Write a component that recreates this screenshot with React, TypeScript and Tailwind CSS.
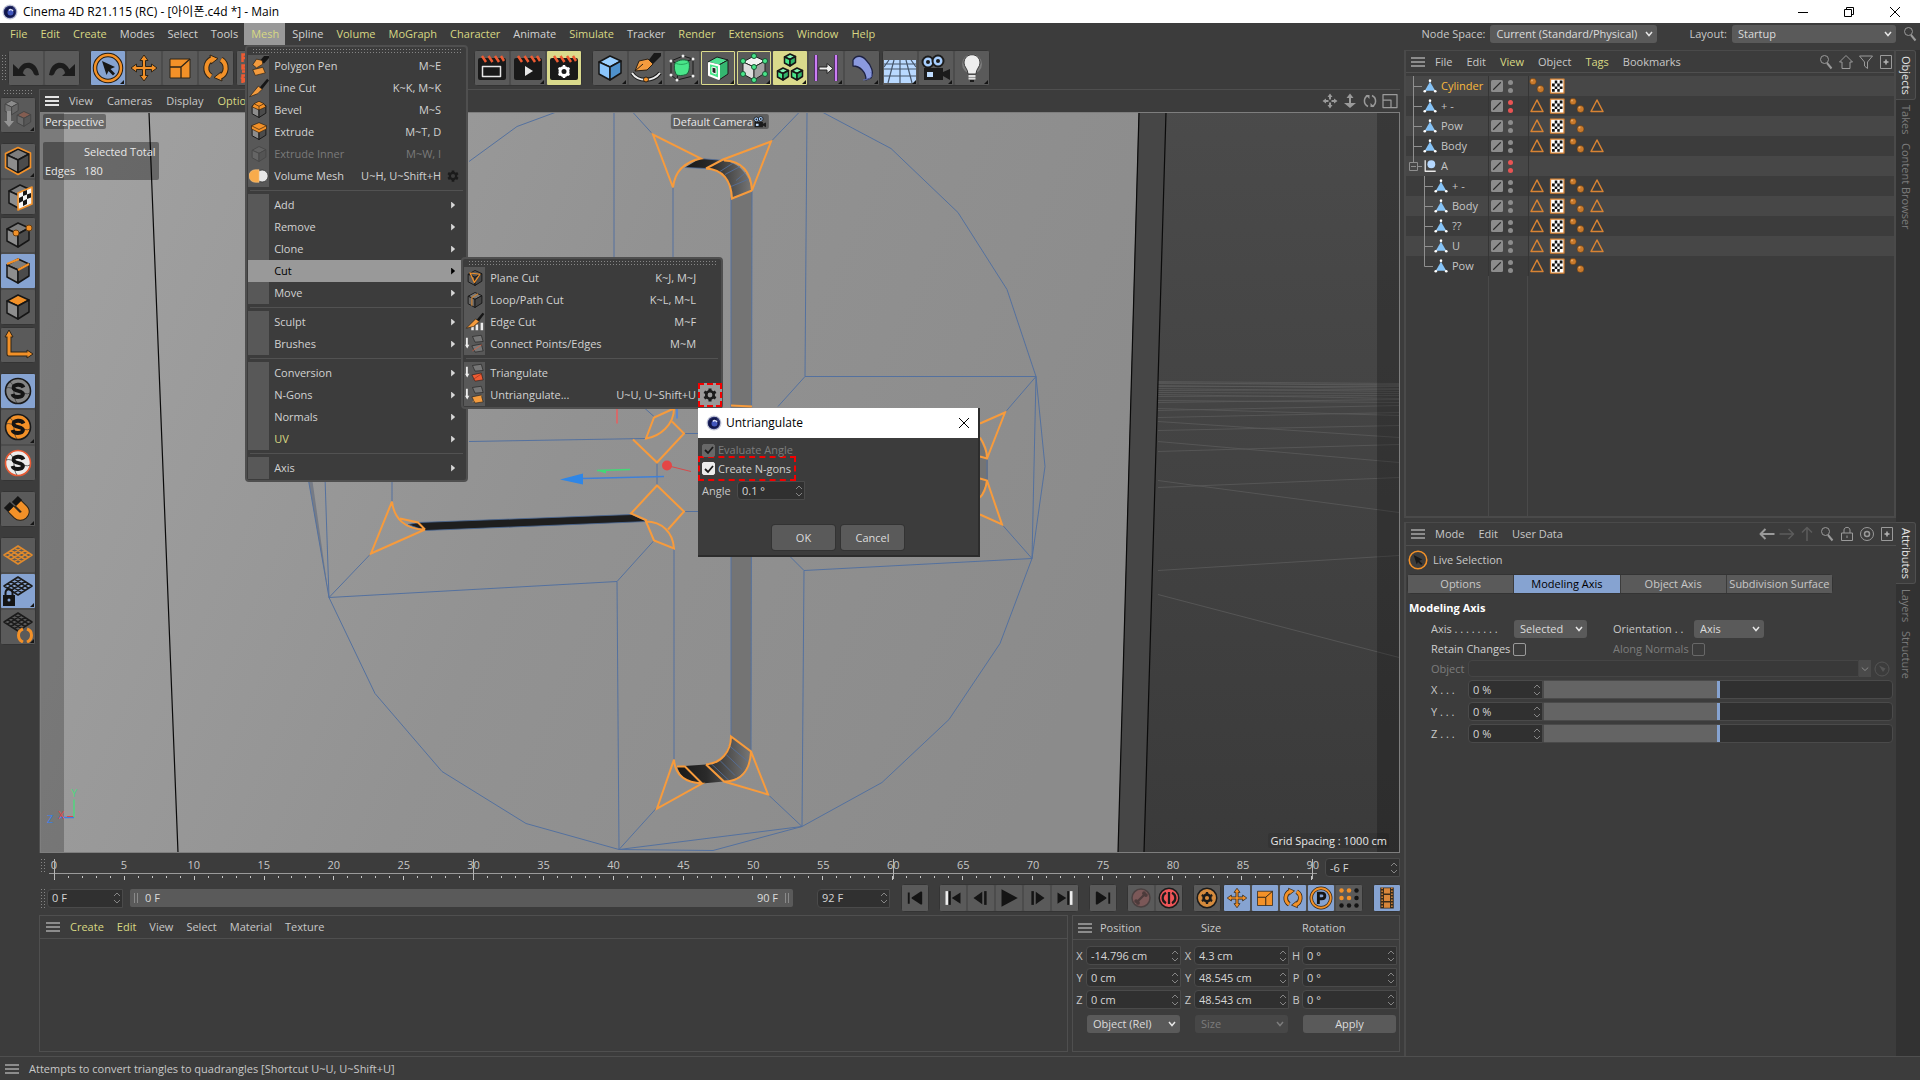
import { useState } from "react";
import type { ReactNode } from "react";

// small svg wrapper, every icon is drawn on a 32x32 canvas
function Ico({ children, size = "size-8" }: { children: ReactNode; size?: string }) {
    return (
        <svg viewBox="0 0 32 32" className={`${size} shrink-0`} fill="none" strokeLinejoin="round">
            {children}
        </svg>
    )
}

function CubeShape({ top = "#7d7d7d", left = "#8d8d8d", right = "#4b4b4b", line = "#161616", w = 1.5 }: { top?: string; left?: string; right?: string; line?: string; w?: number }) {
    return (
        <g stroke={line} strokeWidth={w}>
            <path d="M16 4 L27 9 L16 15 L5 10 Z" fill={top} />
            <path d="M5 10 L16 15 V28 L5 22 Z" fill={left} />
            <path d="M27 9 L16 15 V28 L27 21 Z" fill={right} />
        </g>
    )
}

function Gear({ color = "#1b1b1b", size = "size-3" }: { color?: string; size?: string }) {
    return (
        <Ico size={size}>
            <g stroke={color} strokeWidth="7">
                <path d="M16 1 V31 M3 8.500 L29 23.500 M29 8.500 L3 23.500" strokeDasharray="7 16 7" />
            </g>
            <circle cx="16" cy="16" r="8.500" stroke={color} strokeWidth="6" />
        </Ico>
    )
}

function C4dLogo() {
    return (
        <Ico size="size-4">
            <circle cx="16" cy="16" r="15" fill="#c6cad9" />
            <circle cx="16" cy="16" r="12.500" fill="#2a3170" />
            <path d="M5 21 C3 11 11 4 23 5 C20 8 20 10 25 13 C27 18 26 22 22 25 C15 28 8 27 5 21Z" fill="#11174a" />
            <circle cx="17" cy="17" r="6" fill="#4257bd" />
            <path d="M14 13 C16 10 20 11 22 14" stroke="#dfe5fb" strokeWidth="3" />
        </Ico>
    )
}

function Burger({ color = "bg-[#8c8c8c]" }: { color?: string }) {
    return (
        <button aria-label="Panel menu" className="flex w-3.5 flex-col gap-[2px]">
            <span className={`h-[2px] ${color}`} />
            <span className={`h-[2px] ${color}`} />
            <span className={`h-[2px] ${color}`} />
        </button>
    )
}

function Grip({ vertical = false }: { vertical?: boolean }) {
    return vertical
        ? <div className="h-7 w-[5px] shrink-0 bg-[radial-gradient(#858585_30%,transparent_31%)] bg-[size:3px_3px]" />
        : <div className="h-[5px] w-full bg-[radial-gradient(#858585_30%,transparent_31%)] bg-[size:3px_3px]" />
}

/* ---------- tool icons ---------- */
const MoveShape = (
    <path d="M16 3 L20 8.500 H17.500 V14.500 H23.500 V12 L29 16 L23.500 20 V17.500 H17.500 V23.500 H20 L16 29 L12 23.500 H14.500 V17.500 H8.500 V20 L3 16 L8.500 12 V14.500 H14.500 V8.500 H12 Z" fill="#f39128" stroke="#2d2418" />
)
const ScaleShape = (
    <g stroke="#2d2418"><path d="M6 7 H26 V26 H6 Z" fill="#f39128" /><path d="M6 15 H17 V26 M17 15 L26 7" strokeWidth="1.300" /></g>
)
const RotateShape = (
    <g>
        <g stroke="#2d2418" strokeWidth="6"><path d="M11 24.500 A10 10 0 0 1 12.500 6.800" /><path d="M21 7.500 A10 10 0 0 1 19.500 25.200" /></g>
        <path d="M10 3 L18 6.500 L11 12Z M22 29 L14 25.500 L21 20Z" fill="#f39128" stroke="#2d2418" />
        <g stroke="#f39128" strokeWidth="4"><path d="M11 24.500 A10 10 0 0 1 12.500 6.800" /><path d="M21 7.500 A10 10 0 0 1 19.500 25.200" /></g>
    </g>
)

const Undo = <Ico><path d="M8 20 C10 9 24 7 28 19 L29 23 C25 24 24 23 23 20 C20 14 14 15 13 21" fill="#1c1c1c" /><path d="M3 12 L3 24 L16 24Z" fill="#1c1c1c" /></Ico>
const Redo = <Ico><path d="M24 20 C22 9 8 7 4 19 L3 23 C7 24 8 23 9 20 C12 14 18 15 19 21" fill="#1c1c1c" /><path d="M29 12 L29 24 L16 24Z" fill="#1c1c1c" /></Ico>
const LiveSel = (
    <Ico>
        <circle cx="16" cy="16" r="13" stroke="#241c12" strokeWidth="4.500" />
        <circle cx="16" cy="16" r="13" stroke="#f39128" strokeWidth="2.500" />
        <path d="M10 9 L23 15 L18.500 17 L23 21.500 L21 23.500 L16.500 19 L14.500 23Z" fill="#181818" />
    </Ico>
)
const Psr = (
    <Ico>
        <g stroke="#ee5b33" strokeWidth="2.500" strokeLinejoin="miter">
            <path d="M4.500 10 V2.500 H8.500 V6 H5 M9 13.500 H4.500 V16.500 H8.500 V19.500 H4 M4.500 31 V23.500 H8.500 V27 H5 L9 31" />
        </g>
    </Ico>
)

function Clapper({ children }: { children: ReactNode }) {
    return (
        <Ico>
            <rect x="2" y="6" width="28" height="22" rx="2" fill="#191919" />
            <path d="M6 4 L10 10 M12.500 4 L16.500 10 M19 4 L23 10 M25 4 L28 9" stroke="#ee5b33" strokeWidth="2.500" />
            {children}
        </Ico>
    )
}

const RenderView = <Clapper><rect x="6.500" y="14.500" width="18" height="10" stroke="#e6e6e6" strokeWidth="1.500" /></Clapper>
const RenderPic = <Clapper><path d="M13 14 L21 19 L13 24Z" fill="#e6e6e6" /></Clapper>
const RenderSet = <Clapper><circle cx="16" cy="19.500" r="4" stroke="#fff" strokeWidth="3" /><path d="M16 13 V26 M10.500 16 L21.500 23 M21.500 16 L10.500 23" stroke="#fff" strokeWidth="2.500" strokeDasharray="3 7 3" /></Clapper>

const Primitive = <Ico><CubeShape top="#9bd0ff" left="#8bc5fb" right="#4f92cd" /></Ico>
const PenTool = (
    <Ico>
        <path d="M18 9 L24 1 H31 V4 L23 12Z" fill="#191919" />
        <path d="M5 19 L9 9 L18 7 L23 12 L17 18Z" fill="#f39b3e" stroke="#2a2015" />
        <path d="M5 19 L13 12" stroke="#2a2015" />
        <path d="M2 21 C8 30 23 30 30 21" stroke="#1b1b1b" strokeWidth="4" />
        <path d="M2 21 C8 30 23 30 30 21" stroke="#ededed" strokeWidth="2" />
        <circle cx="16" cy="27.500" r="2.500" fill="#f39128" stroke="#2a2015" />
    </Ico>
)
const Subdiv = (
    <Ico>
        <path d="M5 9 L17 4 L27 7 V24 L11 28 L5 23Z M5 9 L13 12 L27 7 M13 12 L11 28" stroke="#1a1a1a" />
        <path d="M9 11 C13 7 21 7 23 10 C24 15 23 20 21 22 C17 24 11 24 10 22 C8 18 8 14 9 11Z" fill="#49e68a" stroke="#1d5e3a" />
        <path d="M9 11 C13 13 19 13 23 10" stroke="#27a35c" />
        <g fill="#efefef"><circle cx="5" cy="9" r="1.500" /><circle cx="17" cy="4" r="1.500" /><circle cx="27" cy="7" r="1.500" /><circle cx="27" cy="24" r="1.500" /><circle cx="11" cy="28" r="1.500" /><circle cx="5" cy="23" r="1.500" /></g>
    </Ico>
)
const Extrude = (
    <Ico>
        <path d="M6 10 L15 5 L26 8 L17 13Z" fill="#4fe092" stroke="#1b1b1b" />
        <path d="M17 13 L26 8 V22 L17 28Z" fill="#35b770" stroke="#1b1b1b" />
        <path d="M7 11 L17 13.500 V27 L7 23Z" fill="#49e68a" stroke="#fff" strokeWidth="2" />
        <path d="M10 15 L14 16 V22 L10 20.500Z" fill="#222" stroke="#fff" />
    </Ico>
)
const Cloner = (
    <Ico>
        <CubeShape top="#f2f2f2" left="#dcdcdc" right="#a2a2a2" line="#222" w={1} />
        <g fill="#49e68a" stroke="#1b5535"><circle cx="16" cy="4" r="2.500" /><circle cx="27" cy="9" r="2.500" /><circle cx="5" cy="9" r="2.500" /><circle cx="16" cy="15" r="2.500" /><circle cx="5" cy="22" r="2.500" /><circle cx="27" cy="22" r="2.500" /><circle cx="16" cy="28" r="2.500" /></g>
    </Ico>
)
const ArrayIcon = (
    <Ico>
        <g transform="translate(8 0) scale(.5)"><CubeShape top="#7ff4b2" left="#49e68a" right="#30b56b" w={3} /></g>
        <g transform="translate(1 14) scale(.5)"><CubeShape top="#7ff4b2" left="#49e68a" right="#30b56b" w={3} /></g>
        <g transform="translate(15 14) scale(.5)"><CubeShape top="#7ff4b2" left="#49e68a" right="#30b56b" w={3} /></g>
    </Ico>
)
const FieldIcon = (
    <Ico>
        <path d="M6 3 V29 M26 3 V29" stroke="#2a1d33" strokeWidth="4" />
        <path d="M6 3 V29 M26 3 V29" stroke="#cb7df5" strokeWidth="2.500" />
        <path d="M9 15 H17 V11.500 L23 16.500 L17 21.500 V18 H9Z" fill="#efefef" stroke="#222" />
    </Ico>
)
const Deformer = <Ico><path d="M7 8 C10 3 16 3 20 8 C26 14 28 21 25 26 L20 28 C20 20 14 14 7 14Z" fill="#8b9ae0" stroke="#1e2242" strokeWidth="1.300" /><path d="M17 28 C26 27 27 24 25 20" stroke="#5b68ab" /></Ico>
const FloorIcon = (
    <Ico>
        <rect x="0" y="8" width="32" height="23" fill="#b9d9ff" />
        <path d="M0 12 H32 M0 17 H32 M0 24 H32 M16 8 V31 M10 8 L4 31 M22 8 L28 31 M5 8 L0 15 M27 8 L32 15" stroke="#46566b" strokeWidth="1.200" />
    </Ico>
)
const CameraShape = (
    <g>
        <circle cx="8" cy="10" r="5.500" fill="#a8cfff" stroke="#1b1b1b" strokeWidth="2" /><circle cx="18" cy="9" r="5.500" fill="#a8cfff" stroke="#1b1b1b" strokeWidth="2" />
        <circle cx="8" cy="10" r="2" fill="#1b1b1b" /><circle cx="18" cy="9" r="2" fill="#1b1b1b" />
        <path d="M4 16 H23 V20 L30 17 V28 L23 24 V28 H4Z" fill="#1b1b1b" /><rect x="7" y="20" width="6" height="5" fill="#bfddff" />
    </g>
)
const LightIcon = (
    <Ico>
        <circle cx="16" cy="12" r="10" fill="#a0a0a0" opacity=".5" />
        <path d="M8 11 C8 0 24 0 24 11 C24 15 20 17 20 22 H12 C12 17 8 15 8 11Z" fill="#eee" stroke="#3a3a3a" />
        <path d="M12.500 24 H19.500 M12.500 26.500 H19.500" stroke="#e0e0e0" strokeWidth="2" /><path d="M14 29 H18" stroke="#1b1b1b" strokeWidth="2" />
    </Ico>
)

/* ---------- left palette ---------- */
const MakeEditable = (
    <Ico>
        <g opacity=".55">
            <g transform="translate(0 -1) scale(.6)"><CubeShape top="#b5b5b5" left="#8d8d8d" right="#707070" line="#333" /></g>
            <g transform="translate(12 10) scale(.62)"><CubeShape top="#a5604a" left="#777" right="#555" line="#333" /></g>
            <path d="M5 12 H9 V22 H12 L7 28 L2 22 H5Z" fill="#c5c5c5" />
        </g>
    </Ico>
)
const ModelMode = <Ico><CubeShape /><path d="M16 2.500 L28.500 8 V22.500 L16 29.500 L3.500 22.500 V8.500Z" stroke="#f39128" strokeWidth="1.600" /></Ico>
const TextureMode = (
    <Ico>
        <g transform="translate(2 0)"><CubeShape /></g>
        <path d="M16 12 L30 6 V23 L16 29Z" fill="#f5f5f5" stroke="#f39128" strokeWidth="1.600" />
        <path d="M21 10.500 L25 9 V13.500 L21 15Z M17 17 L21 15 V20 L17 22Z M25 13.500 L29 12 V16.500 L25 18Z M21 20 L25 18 V23 L21 25Z" fill="#161616" />
    </Ico>
)
const PointMode = <Ico><CubeShape /><circle cx="14" cy="14" r="3" fill="#f39128" stroke="#6e400e" /><circle cx="27" cy="9" r="3" fill="#f39128" stroke="#6e400e" /></Ico>
const EdgeMode = <Ico><CubeShape /><path d="M5 9 L17 4 M16 15 L27 9" stroke="#f39128" strokeWidth="2" /></Ico>
const PolyMode = <Ico><CubeShape top="#f39128" /></Ico>
const AxisMode = <Ico><path d="M7 5 V25 H27" stroke="#2d2418" strokeWidth="5" /><path d="M7 1 L11 8 H3Z M31 25 L25 29 V21Z" fill="#f39128" stroke="#2d2418" /><path d="M7 6 V25 H26" stroke="#f39128" strokeWidth="3" /></Ico>

function SnapIcon({ fill, ring = "#1a1a1a" }: { fill: string; ring?: string }) {
    return (
        <Ico>
            <circle cx="16" cy="16" r="12.500" fill={fill} stroke={ring} strokeWidth="1.600" />
            <path d="M8 7 C14 10 10 22 15 28 M4 13 C10 10 22 22 28 18" stroke="#333" strokeWidth=".7" />
            <path d="M21.500 12.500 C20 8.500 11 9 11.500 13 C12 17 21 15 21 19 C20.500 23 11.500 23 10.500 19" stroke="#141414" strokeWidth="3.800" />
        </Ico>
    )
}
const Magnet = (
    <Ico>
        <path d="M9 16 L15 22 C19 26 26 20 22 16 L16 10" stroke="#2d2418" strokeWidth="9" />
        <path d="M9 16 L15 22 C19 26 26 20 22 16 L16 10" stroke="#f39128" strokeWidth="7" />
        <path d="M5 19 L11 13 M13 13 L19 7" stroke="#151515" strokeWidth="6" transform="translate(-1 -2)" />
    </Ico>
)
function GridIcon({ color, children }: { color: string; children?: ReactNode }) {
    return (
        <Ico>
            <g transform={children ? "translate(0 -7)" : "translate(0 -2)"} stroke={color} strokeWidth="1.600">
                <path d="M16 9 L30 18 L16 27 L2 18Z M12.500 11.200 L26.500 20.200 M9 13.500 L23 22.500 M5.500 15.700 L19.500 24.700 M19.500 11.200 L5.500 20.200 M23 13.500 L9 22.500 M26.500 15.700 L12.500 24.700" />
            </g>
            {children}
        </Ico>
    )
}

/* ---------- buttons ---------- */
type Tool = { name: string; icon: ReactNode; on?: "blue" | "yellow" | "outline"; more?: boolean }

function ToolGroup({ tools, column = false }: { tools: Tool[]; column?: boolean }) {
    return (
        <div className={`flex shrink-0 gap-[2px] rounded-sm bg-[#4c4c4c] ring-1 ring-[#343434] ${column ? "flex-col" : ""}`}>
            {tools.map((t) => (
                <button
                    key={t.name}
                    aria-label={t.name}
                    className={`relative flex size-[34px] items-center justify-center rounded-[1px]
                    ${t.on === "blue" ? "bg-[#86a3d1]" : t.on === "yellow" ? "bg-[#dada8c]" : "bg-[#5a5a5a]"}
                    ${t.on === "outline" ? "outline-1 -outline-offset-1 outline-[#dada8c]" : ""}`}
                >
                    {t.icon}
                    {t.more && <span className="absolute right-[1px] bottom-[1px] size-1 bg-[#151515] [clip-path:polygon(100%_0,100%_100%,0_100%)]" />}
                </button>
            ))}
        </div>
    )
}

function MiniGroup({ tools }: { tools: Tool[] }) {
    return (
        <div className="flex shrink-0 gap-[2px] rounded-sm bg-[#4c4c4c] ring-1 ring-[#343434]">
            {tools.map((t) => (
                <button key={t.name} aria-label={t.name} className={`flex size-[26px] items-center justify-center rounded-[1px] ${t.on === "blue" ? "bg-[#86a3d1]" : "bg-[#5a5a5a]"}`}>
                    {t.icon}
                </button>
            ))}
        </div>
    )
}

/* ---------- form controls ---------- */
function NumberField({ label, value, className = "" }: { label: string; value: string; className?: string }) {
    const [text, setText] = useState(value)
    return (
        <span className={`grid h-[19px] items-center rounded-l-sm border border-[#4a4a4a] bg-[#303030] ${className}`}>
            <input aria-label={label} value={text} onChange={(e) => setText(e.target.value)} className="col-start-1 row-start-1 w-full min-w-0 bg-transparent pl-1 text-[#d6d6d6] outline-none" />
            <svg viewBox="0 0 8 14" className="pointer-events-none col-start-1 row-start-1 mr-[1px] h-3.5 w-2 justify-self-end" fill="none" stroke="#858585">
                <path d="M1 5 L4 2 L7 5 M1 9 L4 12 L7 9" />
            </svg>
        </span>
    )
}

function SelectBox({ label, value, className = "", disabled = false }: { label: string; value: string; className?: string; disabled?: boolean }) {
    return (
        <span className={`grid h-[18px] items-center rounded-[3px] ${disabled ? "bg-[#474747] text-[#7c7c7c]" : "bg-[#5a5a5a] text-[#dcdcdc]"} ${className}`}>
            <select aria-label={label} disabled={disabled} className="col-start-1 row-start-1 w-full appearance-none bg-transparent pl-1.5 outline-none">
                <option>{value}</option>
            </select>
            <svg viewBox="0 0 8 6" className="pointer-events-none col-start-1 row-start-1 mr-1 h-1.5 w-2 justify-self-end" fill="none" stroke={disabled ? "#7c7c7c" : "#e6e6e6"} strokeWidth="1.500">
                <path d="M1 1 L4 4.500 L7 1" />
            </svg>
        </span>
    )
}

function CheckBox({ label, checked = false, disabled = false, before = false }: { label: string; checked?: boolean; disabled?: boolean; before?: boolean }) {
    const [on, setOn] = useState(checked)
    return (
        <label className={`flex items-center gap-[3px] ${disabled ? "text-[#7c7c7c]" : "text-[#d0d0d0]"} ${before ? "flex-row-reverse justify-end" : ""}`}>
            <span className="grid size-[13px] place-items-center">
                <input
                    type="checkbox"
                    checked={on}
                    disabled={disabled}
                    onChange={() => setOn(!on)}
                    className="col-start-1 row-start-1 size-[13px] appearance-none rounded-[2px] border border-[#9a9a9a] checked:border-[#ececec] checked:bg-[#ececec] disabled:border-[#686868] disabled:checked:bg-[#686868]"
                />
                {on && (
                    <svg viewBox="0 0 12 12" className="pointer-events-none col-start-1 row-start-1 size-3" fill="none" stroke="#1b1b1b" strokeWidth="1.800">
                        <path d="M2 6 L5 9 L10 3" />
                    </svg>
                )}
            </span>
            {label}
        </label>
    )
}

/* ---------- mesh menu ---------- */
type Entry = { label: string; keys?: string; icon?: ReactNode; off?: boolean; sub?: boolean; yellow?: boolean; gear?: boolean }

const PatchDown = (a: string, b: string) => (
    <Ico size="size-5">
        <path d="M12 4 L26 2 L29 12 L16 13Z" fill="#777" stroke="#1d1d1d" />
        <path d="M11 19 L26 16 L29 27 L16 29Z" fill={a} stroke="#1d1d1d" />
        <path d="M12 27 L27 17" stroke={b} />
        <path d="M3 6 V20" stroke="#eee" strokeWidth="3" /><path d="M0 17 H7 L3.500 23Z" fill="#eee" />
    </Ico>
)

const meshGroups: Entry[][] = [
    [
        { label: "Polygon Pen", keys: "M~E", icon: <Ico size="size-5"><path d="M18 7 L24 0 H32 V3 L24 12Z" fill="#161616" /><path d="M6 14 L12 5 L21 7 L22 13 L12 19Z" fill="#f39b3e" stroke="#20180e" /><path d="M6 22 L22 18 L26 27 L10 31Z" fill="#f39b3e" stroke="#20180e" /></Ico> },
        { label: "Line Cut", keys: "K~K, M~K", icon: <Ico size="size-5"><path d="M17 15 L29 1 L32 4 L21 18Z" fill="#161616" /><path d="M1 30 L15 13 L21 18 L14 25Z" fill="#f39b3e" stroke="#20180e" /></Ico> },
        { label: "Bevel", keys: "M~S", icon: <Ico size="size-5"><CubeShape /><path d="M16 2 L24 6 L27 11 L16 16 L5 11 L8 6Z" fill="#f39128" stroke="#20180e" /><path d="M8 6 L16 10 L24 6 M16 10 V16" stroke="#20180e" /></Ico> },
        { label: "Extrude", keys: "M~T, D", icon: <Ico size="size-5"><CubeShape /><path d="M16 1 L28 6 V11 L16 17 L4 11 V6Z" fill="#f39128" stroke="#20180e" /><path d="M4 6 L16 12 L28 6" stroke="#20180e" /></Ico> },
        { label: "Extrude Inner", keys: "M~W, I", off: true, icon: <Ico size="size-5"><g opacity=".25"><CubeShape /></g></Ico> },
        { label: "Volume Mesh", keys: "U~H, U~Shift+H", gear: true, icon: <Ico size="size-5"><circle cx="21" cy="16" r="9.500" fill="#e6e6e6" stroke="#222" /><path d="M16 6 H10 A10 10 0 0 0 10 26 H16Z" fill="#f8ab4b" stroke="#f8c27f" /></Ico> },
    ],
    [{ label: "Add", sub: true }, { label: "Remove", sub: true }, { label: "Clone", sub: true }, { label: "Cut", sub: true }, { label: "Move", sub: true }],
    [{ label: "Sculpt", sub: true }, { label: "Brushes", sub: true }],
    [{ label: "Conversion", sub: true }, { label: "N-Gons", sub: true }, { label: "Normals", sub: true }, { label: "UV", sub: true, yellow: true }],
    [{ label: "Axis", sub: true }],
]

const cutGroups: Entry[][] = [
    [
        { label: "Plane Cut", keys: "K~J, M~J", icon: <Ico size="size-5"><CubeShape top="#555" left="#5c5c5c" right="#474747" /><path d="M8 8 L24 10 L15 23Z" stroke="#f39128" strokeWidth="2" /></Ico> },
        { label: "Loop/Path Cut", keys: "K~L, M~L", icon: <Ico size="size-5"><CubeShape top="#777" left="#666" right="#444" /><path d="M11 25 V12 L21 6" stroke="#c98338" strokeWidth="2" /></Ico> },
        { label: "Edge Cut", keys: "M~F", icon: <Ico size="size-5"><path d="M19 12 L28 1 L31 3 L22 15Z" fill="#161616" /><path d="M12 29 V22 M19 29 V20 M27 29 V17" stroke="#ececec" strokeWidth="4" /><path d="M2 26 L17 11 L23 15 L14 23Z" fill="#f39b3e" stroke="#20180e" /></Ico> },
        { label: "Connect Points/Edges", keys: "M~M", icon: PatchDown("#777", "#ee5b33") },
    ],
    [
        { label: "Triangulate", icon: PatchDown("#ee5b33", "#8b2f17") },
        { label: "Untriangulate...", keys: "U~U, U~Shift+U", gear: true, icon: PatchDown("#f39b3e", "#f39b3e") },
    ],
]

function Menu({ groups, className, sub = false }: { groups: Entry[][]; className: string; sub?: boolean }) {
    return (
        <div className={`absolute z-20 rounded-sm border-2 border-[#4f4f4f] bg-[#3c3c3c] px-[1px] pb-[1px] text-[#d2d2d2] ${className}`}>
            <div className="px-1 pt-[1px]"><Grip /></div>
            <div className="pt-[2px]">
                {groups.map((g, i) => (
                    <div key={i}>
                        {i > 0 && <div className="mx-[2px] my-[3px] border-t border-[#525252]" />}
                        {g.map((m) => {
                            const open = m.label === "Cut"
                            return (
                                <div key={m.label} className={`relative flex h-[22px] items-center ${open ? "bg-[#999] text-black" : ""} ${m.off ? "text-[#7a7a7a]" : ""}`}>
                                    <button className="flex h-full flex-1 items-center">
                                        <span className={`mr-[5px] flex h-full w-[21px] items-center justify-center ${open ? "" : "bg-[#585858]"}`}>{m.icon}</span>
                                        <span className={`flex-1 text-left ${m.yellow ? "text-[#d8d883]" : ""}`}>{m.label}</span>
                                        {m.keys}
                                    </button>
                                    <span className="flex w-[24px] shrink-0 items-center justify-center">
                                        {m.gear && !sub && <Gear />}
                                        {m.sub && <span className={`h-[7px] w-1 [clip-path:polygon(0_0,100%_50%,0_100%)] ${open ? "bg-black" : "bg-[#d8d8d8]"}`} />}
                                    </span>
                                    {m.gear && sub && (
                                        <button aria-label="Untriangulate options" className="absolute -right-[2px] flex size-[24px] items-center justify-center border-2 border-dashed border-[#f30000] bg-[#999]">
                                            <Gear size="size-3.5" />
                                        </button>
                                    )}
                                    {open && <Menu groups={cutGroups} sub className="-top-[3px] left-[213px] w-[262px]" />}
                                </div>
                            )
                        })}
                    </div>
                ))}
            </div>
        </div>
    )
}

const mainMenu = ["File", "Edit", "Create", "Modes", "Select", "Tools", "Mesh", "Spline", "Volume", "MoGraph", "Character", "Animate", "Simulate", "Tracker", "Render", "Extensions", "Window", "Help"]
const greyMenus = ["Modes", "Select", "Tools", "Spline", "Animate", "Tracker"]

function MenuBar() {
    return (
        <nav className="flex h-[22px] items-center pl-[3px]">
            {mainMenu.map((m) => (
                <div key={m} className="relative h-full">
                    <button className={`h-full pr-1.5 pl-[7px] ${m === "Mesh" ? "bg-[#999]" : ""} ${greyMenus.includes(m) ? "text-[#d2d2d2]" : "text-[#d8d883]"}`}>{m}</button>
                    {m === "Mesh" && <Menu groups={meshGroups} className="top-[22px] left-[1px] w-[223px]" />}
                </div>
            ))}
            <div className="ml-auto flex items-center pr-[2px]">
                <span className="mr-[5px]">Node Space:</span>
                <SelectBox label="Node Space" value="Current (Standard/Physical)" className="mr-8 w-[167px]" />
                <span className="mr-[5px]">Layout:</span>
                <SelectBox label="Layout" value="Startup" className="mr-1.5 w-[164px]" />
                <SearchIcon />
            </div>
        </nav>
    )
}

function SearchIcon() {
    return <Ico size="size-4"><circle cx="13" cy="11" r="8" stroke="#9a9a9a" strokeWidth="2" /><path d="M18 18 L27 29" stroke="#9a9a9a" strokeWidth="4" /></Ico>
}
const PlusBox = <Ico size="size-4"><rect x="5" y="3" width="22" height="26" stroke="#9a9a9a" strokeWidth="2" /><path d="M16 11 V21 M11 16 H21" stroke="#b5b5b5" strokeWidth="3" /></Ico>

/* ---------- viewport ---------- */
const gridLines = [
    [382, 384], [383, 386], [384, 385], [386, 389], [387, 387], [389, 392], [391, 390], [393, 394], [395, 399], [397, 396],
    [401, 403], [403, 400], [409, 416], [411, 406], [418, 413], [422, 438], [431, 426], [442, 463], [452, 445], [481, 513], [488, 478], [571, 556], [595, 658],
]

function Scene() {
    return (
        <svg viewBox="41 113 1358 740" preserveAspectRatio="xMidYMid slice" className="absolute inset-0 size-full" fill="none">
            <defs>
                <linearGradient id="face" x1="0" y1="0.300" x2="1" y2="0.600">
                    <stop offset="0" stopColor="#a1a1a1" /><stop offset=".5" stopColor="#929292" /><stop offset="1" stopColor="#8b8b8b" />
                </linearGradient>
                <linearGradient id="sky" x1="0" y1="0" x2="0" y2="1">
                    <stop offset="0" stopColor="#4d4d4d" /><stop offset="1" stopColor="#373737" />
                </linearGradient>
                <linearGradient id="bend" x1="0" y1="0" x2="1" y2="0">
                    <stop offset="0" stopColor="#181818" /><stop offset=".4" stopColor="#2a2a2a" /><stop offset="1" stopColor="#777" />
                </linearGradient>
            </defs>
            <rect x="0" y="0" width="1500" height="1000" fill="url(#sky)" />
            {gridLines.map(([a, b], i) => <path key={i} d={`M1158 ${a} L1399 ${b}`} stroke="#5a5a5a" strokeWidth=".8" />)}
            <path d="M0 100 H1139 L1118 853 H0Z" fill="url(#face)" />
            <path d="M1139 113 H1166 L1144 853 H1118Z" fill="#464646" />
            <path d="M149 113 L178 853 M1139 113 L1118 853 M1166 113 L1144 853" stroke="#0a0a0a" strokeWidth="1.200" />

            {/* walls of the plus shaped slot */}
            <path d="M731 198 L752 190 L751 752 L731 737Z" fill="#747474" />
            <path d="M980 440 L988 458 V481 L980 498Z" fill="#747474" />
            <path d="M408 525 L419 523 L632 515 L647 522 L425 531Z" fill="#1e1e1e" stroke="#4a6896" strokeWidth=".8" />
            <path d="M685 168 L700 159 L725 161 C742 165 750 178 752 191 L732 198 C731 180 722 170 706 169Z" fill="url(#bend)" />
            <path d="M677 767 L706 765 C722 763 730 750 731 737 L751 752 C750 770 740 781 724 782 L702 784 C686 784 680 776 677 767Z" fill="url(#bend)" />
            <path d="M308 478 L312 478 L329 598Z" fill="#767b85" />

            <g stroke="#54719f" strokeWidth="1">
                <path d="M555 113 L517 127 L469 162 M823 113 L891 149 L958 213 L1007 290 L1036 377 L1045 467 L1032 559 L1000 644 L949 720 L882 783 L802 827 L713 851 L619 850 L526 824 L442 772 L375 694 L329 598 L308 478" />
                <path d="M614 113 V270 M633 113 L653 135 M799 113 L771 142 M807 113 L805 377 L1036 377 L1032 559 L804 571 L802 827 L619 850 L617 582 L329 598 L325 478" />
                <path d="M805 377 L778 407 M804 571 L788 555 M617 582 L654 541 M619 850 L657 808 M802 827 L768 795 M329 598 L371 554 M1036 377 L1005 413 M1032 559 L1002 525" />
                <path d="M673 188 V260 M731 198 V737 M752 191 L751 752 M674 549 V760 M392 478 V502 M469 442 L646 439 M645 409 L654 417 M657 463 V486 M684 434 H698 M684 512 H698 M987 459 V480" />
                <path d="M736 181 L747 172 M731 187 L750 179 M725 175 L740 167 M720 172 L734 163 M711 764 L729 781 M719 760 L735 776 M725 754 L742 770 M729 746 L748 762 M700 159 L725 161 M685 168 L706 169" strokeWidth=".8" />
            </g>

            <g stroke="#f79b3c" strokeWidth="2">
                <path d="M673 188 L653 135 L701 159 C686 162 675 170 673 188 M682 168 L691 162" />
                <path d="M706 169 L723 160 L771 142 L752 191 C751 173 742 161 724 161 M706 169 C722 170 731 180 732 199 L752 191" />
                <path d="M392 502 L371 554 L425 530 C405 530 394 519 392 502 M400 519 L418 523 L425 530" />
                <path d="M633 440 L657 463 L684 434 L672 422 M674 409 L654 418 L646 439 C660 437 674 425 674 409Z" />
                <path d="M668 530 L684 512 L657 486 L631 514 L647 521 M646 522 L654 541 L674 549 C673 533 662 522 646 522Z" />
                <path d="M674 760 L657 809 L702 784 C686 783 675 776 674 760 M677 767 H685 L702 784" />
                <path d="M706 765 L724 782 L768 795 L751 752 L731 737 C731 752 721 764 706 765 M751 752 C750 772 740 782 724 782" />
                <path d="M731 406 L752 407 M980 424 L1005 413 L987 459 L980 457 M980 438 C984 444 987 450 987 459 M980 479 L987 481 L1002 525 L980 515 M987 481 C986 488 984 494 980 498" />
            </g>

            {/* axis gizmo */}
            <path d="M617 409 V424" stroke="#d56a6a" strokeWidth="2" />
            <path d="M677 409 V419" stroke="#5b87d0" strokeWidth="2" />
            <path d="M667 466 L691 472" stroke="#d74a4a" /><circle cx="667" cy="466" r="5" fill="#e54646" />
            <path d="M597 471 L630 470" stroke="#43d877" strokeWidth="1.500" /><path d="M597 471 H606 V474Z" fill="#43d877" />
            <path d="M583 479 L664 477" stroke="#3f80d8" strokeWidth="1.500" /><path d="M560 480 L583 474 V485Z" fill="#2f86e6" />

            {/* areas outside the render frame */}
            <path d="M0 0 H64 V1000 H0Z M1377 0 H1500 V1000 H1377Z" fill="#000" opacity=".23" />

            {/* world axis */}
            <path d="M74 800 V818" stroke="#4fd67e" strokeWidth="1.500" /><path d="M58 818 H74" stroke="#3f7fe0" strokeWidth="1.500" /><path d="M67 817 H73" stroke="#e04848" />
            <g fontSize="11"><text x="71" y="797" fill="#4fd67e">Y</text><text x="58" y="819" fill="#e04848">X</text><text x="47" y="823" fill="#3f7fe0">Z</text></g>
        </svg>
    )
}

function Viewport() {
    const tag = "absolute rounded-[2px] bg-black/35 text-[#e8e8e8]"
    return (
        <section className="flex flex-1 flex-col border-t border-l border-[#4f4f4f]">
            <div className="flex h-[22px] items-center gap-[14px] pl-[5px] pr-0.5">
                <div className="-mr-1 flex"><Burger color="bg-[#e4e4e4]" /></div>
                {["View", "Cameras", "Display"].map((m) => <button key={m}>{m}</button>)}
                <button className="text-[#d8d883]">Options</button>
                <div className="ml-auto flex items-center gap-1 text-[#9a9a9a]">
                    <button aria-label="Pan"><Ico size="size-4"><path d="M16 1 L21 8 H11Z M16 31 L21 24 H11Z M1 16 L8 11 V21Z M31 16 L24 11 V21Z" fill="#9a9a9a" /><path d="M16 8 V24 M8 16 H24" stroke="#9a9a9a" strokeWidth="4" strokeDasharray="5 6" /></Ico></button>
                    <button aria-label="Zoom"><Ico size="size-4"><path d="M16 1 L23 10 H18 V20 H28 L16 30 L4 20 H14 V10 H9Z" fill="#9a9a9a" /></Ico></button>
                    <button aria-label="Orbit"><Ico size="size-4"><path d="M12 27 C2 22 3 9 12 5 M20 5 C30 10 29 23 20 27" stroke="#9a9a9a" strokeWidth="3" /><path d="M7 4 H15 V12Z M25 28 H17 V20Z" fill="#9a9a9a" /></Ico></button>
                    <button aria-label="Toggle view"><Ico size="size-4"><path d="M2 3 H30 V29 H2Z M2 14 H18 V29" stroke="#9a9a9a" strokeWidth="2.500" /></Ico></button>
                </div>
            </div>
            <div className="relative flex-1 border border-[#7e7e7e]">
                <Scene />
                <span className={`${tag} top-[1px] left-[2px] px-[2px] leading-[15px]`}>Perspective</span>
                <div className={`${tag} top-[29px] left-[2px] grid w-[116px] grid-cols-[39px_1fr] px-[2px] leading-[19px]`}>
                    <span /><span>Selected Total</span>
                    <span>Edges</span><span>180</span>
                </div>
                <span className={`${tag} top-[1px] left-1/2 flex -translate-x-1/2 items-center px-[2px] leading-[15px]`}>
                    Default Camera
                    <Ico size="size-3.5">{CameraShape}</Ico>
                </span>
                <span className="absolute right-[10px] bottom-[4px] rounded-[2px] bg-black/10 px-[2px] leading-[15px] text-[#e8e8e8]">Grid Spacing : 1000 cm</span>
            </div>
        </section>
    )
}

/* ---------- timeline ---------- */
function Timeline() {
    const frames = Array.from({ length: 91 }, (_, i) => i)
    const skipStart = <path d="M6 7 V25 M26 7 L12 16 L26 25Z" stroke="#141414" strokeWidth="3" fill="#141414" />
    return (
        <>
            <div className="flex h-8 items-start gap-1 pt-1">
                <div className="mt-[1px] h-4 overflow-hidden pl-[1px]"><Grip vertical /></div>
                <div className="flex-1 pr-1">
                    <div className="border-b border-[#9a9a9a] pl-[5px] pr-1">
                        <div className="flex h-4 justify-between">
                            {frames.filter((f) => f % 5 === 0).map((f) => (
                                <span key={f} className="relative flex w-0 items-center justify-center">
                                    {f}
                                    {f % 30 === 0 && <span className="absolute top-[2px] h-5 w-[1px] bg-[#b5b5b5]" />}
                                </span>
                            ))}
                        </div>
                    </div>
                    <div className="mt-[2px] flex justify-between pl-[5px] pr-1">
                        {frames.map((f) => <span key={f} className={`w-0 border-l border-[#c5c5c5] ${f % 5 === 0 ? "h-[4px]" : "h-[2px]"}`} />)}
                    </div>
                </div>
                <NumberField label="Current frame" value="-6 F" className="mt-[1px] w-[75px]" />
            </div>
            <div className="flex h-[26px] items-center gap-3">
                <div className="flex flex-1 items-center">
                    <div className="mr-0.5 flex h-5 overflow-hidden pl-[1px]"><Grip vertical /></div>
                    <NumberField label="Start frame" value="0 F" className="mr-[7px] w-[76px]" />
                    <div className="mr-6 flex h-[18px] flex-1 items-center gap-[7px] rounded-[2px] bg-[#5a5a5a] px-1 text-[#dcdcdc]">
                        <span className="h-2.5 w-1 border-x border-[#8a8a8a]" />
                        <span className="flex-1">0 F</span>
                        <span>90 F</span>
                        <span className="h-2.5 w-1 border-x border-[#8a8a8a]" />
                    </div>
                    <NumberField label="End frame" value="92 F" className="w-[73px]" />
                </div>
                <MiniGroup tools={[{ name: "Go to start", icon: <Ico size="size-5">{skipStart}</Ico> }]} />
                <MiniGroup tools={[
                    { name: "Previous key", icon: <Ico size="size-5"><path d="M6 5 V27" stroke="#eee" strokeWidth="4" /><path d="M11 5 V27" stroke="#141414" strokeWidth="3" /><path d="M28 7 L14 16 L28 25Z" fill="#141414" /></Ico> },
                    { name: "Previous frame", icon: <Ico size="size-5"><path d="M18 6 L4 16 L18 26Z" fill="#141414" /><path d="M23 5 V27" stroke="#141414" strokeWidth="4" /></Ico> },
                    { name: "Play", icon: <Ico size="size-5"><path d="M4 2 L30 16 L4 30Z" fill="#141414" /></Ico> },
                    { name: "Next frame", icon: <Ico size="size-5"><path d="M14 6 L28 16 L14 26Z" fill="#141414" /><path d="M9 5 V27" stroke="#141414" strokeWidth="4" /></Ico> },
                    { name: "Next key", icon: <Ico size="size-5"><path d="M26 5 V27" stroke="#eee" strokeWidth="4" /><path d="M21 5 V27" stroke="#141414" strokeWidth="3" /><path d="M4 7 L18 16 L4 25Z" fill="#141414" /></Ico> },
                ]} />
                <MiniGroup tools={[{ name: "Go to end", icon: <Ico size="size-5"><g transform="translate(32 0) scale(-1 1)">{skipStart}</g></Ico> }]} />
                <MiniGroup tools={[
                    { name: "Record", icon: <Ico size="size-6"><circle cx="16" cy="16" r="12" fill="#7b5858" stroke="#4a4040" strokeWidth="2" /><path d="M11 21 L21 11" stroke="#4c3b3b" strokeWidth="3" /><g fill="#4c3b3b"><circle cx="9.500" cy="20" r="2.500" /><circle cx="12" cy="22.500" r="2.500" /><circle cx="20" cy="9.500" r="2.500" /><circle cx="22.500" cy="12" r="2.500" /></g></Ico> },
                    { name: "Autokey", icon: <Ico size="size-6"><circle cx="16" cy="16" r="13" fill="#ef5558" stroke="#1b1b1b" strokeWidth="2" /><path d="M12 9 C6 12 6 20 12 23 M20 9 C26 12 26 20 20 23" stroke="#1b1b1b" strokeWidth="3" /><path d="M16 8 V24" stroke="#1b1b1b" strokeWidth="3" /></Ico> },
                ]} />
                <div className="flex gap-1">
                    <MiniGroup tools={[{ name: "Keyframe selection", icon: <Ico size="size-6"><circle cx="16" cy="16" r="13" fill="#d58b3d" stroke="#1b1b1b" strokeWidth="2" /><circle cx="16" cy="16" r="4.500" stroke="#1b1b1b" strokeWidth="3.500" /><path d="M16 8 V24 M9 12 L23 20 M23 12 L9 20" stroke="#1b1b1b" strokeWidth="3" strokeDasharray="4 8 4" /></Ico> }]} />
                    <MiniGroup tools={[
                        { name: "Position", on: "blue", icon: <Ico size="size-6">{MoveShape}</Ico> },
                        { name: "Scale", on: "blue", icon: <Ico size="size-6">{ScaleShape}</Ico> },
                        { name: "Rotation", on: "blue", icon: <Ico size="size-6">{RotateShape}</Ico> },
                        { name: "Parameter", on: "blue", icon: <Ico size="size-6"><circle cx="16" cy="16" r="13" stroke="#2d2418" strokeWidth="4.500" /><circle cx="16" cy="16" r="13" stroke="#f39128" strokeWidth="2.500" /><path d="M12.500 24 V9.500 H17 C22.500 9.500 22.500 17 17 17 H13" stroke="#141414" strokeWidth="3.800" strokeLinejoin="miter" /></Ico> },
                        { name: "Point level", icon: <Ico size="size-6">{[6, 16, 26].map((y) => [6, 16, 26].map((x) => <circle key={`${x}${y}`} cx={x} cy={y} r="3" fill={x < 26 && y < 26 ? "#f39128" : "#141414"} />))}</Ico> },
                    ]} />
                </div>
                <MiniGroup tools={[{ name: "Film", on: "blue", icon: <Ico size="size-6"><rect x="7" y="2" width="18" height="28" fill="#3a2b1a" /><path d="M12 3 H20 V10 H12Z M12 12 H20 V20 H12Z M12 22 H20 V29 H12Z" fill="#d8863a" /><path d="M9.500 2 V30 M22.500 2 V30" stroke="#d8863a" strokeWidth="2" strokeDasharray="2 2" /></Ico> }]} />
            </div>
        </>
    )
}

/* ---------- bottom panels ---------- */
const coords = [
    ["X", "-14.796 cm", "X", "4.3 cm", "H", "0 °"],
    ["Y", "0 cm", "Y", "48.545 cm", "P", "0 °"],
    ["Z", "0 cm", "Z", "48.543 cm", "B", "0 °"],
]

function BottomPanels() {
    return (
        <div className="mt-1 mb-1 flex h-[137px] gap-1">
            <section className="flex-1 border border-[#4f4f4f]">
                <div className="flex h-[23px] items-center gap-[13px] border-b border-[#4f4f4f] pl-1.5">
                    <div className="-mr-[3px] flex"><Burger /></div>
                    {["Create", "Edit", "View", "Select", "Material", "Texture"].map((m, i) => <button key={m} className={i < 2 ? "text-[#d8d883]" : ""}>{m}</button>)}
                </div>
            </section>
            <section className="w-[328px] border border-[#4f4f4f]">
                <div className="flex h-6 items-center border-b border-[#4f4f4f] pl-[5px]">
                    <Burger />
                    <span className="ml-2 w-[101px]">Position</span>
                    <span className="w-[101px]">Size</span>
                    <span>Rotation</span>
                </div>
                <div className="grid grid-cols-[13px_1fr_12px_1fr_12px_1fr] items-center gap-y-[3px] pt-1.5 pr-[1px]">
                    {coords.map((row) => row.map((cell, i) => i % 2 === 0
                        ? <span key={row[0] + i} className="text-center">{cell}</span>
                        : <NumberField key={row[0] + i} label={row[i - 1]} value={cell} className="mr-[1px]" />
                    ))}
                </div>
                <div className="mt-[6px] grid grid-cols-3 gap-[15px] pr-[3px] pl-[14px]">
                    <SelectBox label="Coordinate mode" value="Object (Rel)" />
                    <SelectBox label="Size mode" value="Size" disabled />
                    <button className="h-[18px] rounded-[3px] bg-[#5a5a5a] text-[#dcdcdc]">Apply</button>
                </div>
            </section>
        </div>
    )
}

/* ---------- object manager ---------- */
const objects = [
    { name: "Cylinder", tags: "pc", selected: true },
    { name: "+ -", tags: "tcpt", red: true },
    { name: "Pow", tags: "tcp" },
    { name: "Body", tags: "tcpt" },
    { name: "A", tags: "", red: true, group: true },
    { name: "+ -", tags: "tcpt", child: true },
    { name: "Body", tags: "tcpt", child: true },
    { name: "??", tags: "tcpt", child: true },
    { name: "U", tags: "tcpt", child: true },
    { name: "Pow", tags: "tcp", child: true },
]

function TagIcon({ kind }: { kind: string }) {
    if (kind === "t") return <Ico size="size-4"><path d="M16 4 L28 27 H4Z" stroke="#d88333" strokeWidth="3" /></Ico>
    if (kind === "c") return (
        <Ico size="size-4">
            <rect x="3" y="2" width="27" height="28" fill="#fff" stroke="#d88333" strokeWidth="2.500" />
            <path d="M11.500 5 H16.500 V11 H11.500Z M21.500 5 H27 V11 H21.500Z M6 11 H11.500 V17 H6Z M16.500 11 H21.500 V17 H16.500Z M11.500 17 H16.500 V22 H11.500Z M21.500 17 H27 V22 H21.500Z M6 22 H11.500 V27.500 H6Z M16.500 22 H21.500 V27.500 H16.500Z" fill="#111" />
        </Ico>
    )
    return <Ico size="size-4"><circle cx="8" cy="7" r="6.500" fill="#c97a2c" stroke="#54330f" /><circle cx="23" cy="22" r="7" fill="#c97a2c" stroke="#54330f" /><circle cx="6" cy="5" r="2" fill="#e8a866" /><circle cx="21" cy="19" r="2" fill="#e8a866" /></Ico>
}

function ObjectManager() {
    return (
        <section className="flex h-[468px] flex-col border-2 border-t border-[#4a4a4a]">
            <div className="flex h-[22px] items-center gap-[14px] border-b border-[#4f4f4f] pl-[5px]">
                <div className="-mr-1 flex"><Burger /></div>
                {["File", "Edit", "View", "Object", "Tags", "Bookmarks"].map((m) => <button key={m} className={m === "View" || m === "Tags" ? "text-[#d8d883]" : ""}>{m}</button>)}
                <div className="ml-auto flex items-center gap-1">
                    <SearchIcon />
                    <Ico size="size-4"><path d="M16 3 L29 16 H24 V29 H8 V16 H3Z" stroke="#9a9a9a" strokeWidth="2" /></Ico>
                    <Ico size="size-4"><path d="M3 4 H29 L19 16 V29 L13 24 V16Z" stroke="#9a9a9a" strokeWidth="2" /></Ico>
                    {PlusBox}
                </div>
            </div>
            <table className="mt-[3px] w-full table-fixed border-collapse">
                <tbody>
                    {objects.map((o, i) => (
                        <tr key={i} className="h-5 odd:bg-[#474747]">
                            <td className="h-5 w-[82px] p-0">
                                <div className="flex h-5 items-center">
                                    <svg className={`h-5 shrink-0 ${o.child ? "w-7" : "w-[17px]"}`} fill="none" stroke="#8f8f8f">
                                        {o.child
                                            ? <path d={i === 9 ? "M18.500 0 V10.500 H27" : "M18.500 0 V20 M18.500 10.500 H27"} />
                                            : o.group
                                                ? <path d="M7.500 0 V6.500 M3.500 6.500 H11.500 V14.500 H3.500Z M5 10.500 H10 M11.500 10.500 H16" />
                                                : <path d="M7.500 0 V20 M7.500 10.500 H16" />}
                                    </svg>
                                    {o.group
                                        ? <Ico size="size-3.5"><path d="M5 3 V28 H29" stroke="#e8e8e8" strokeWidth="3" /><circle cx="19" cy="12" r="9" fill="#b5d8ff" /></Ico>
                                        : <Ico size="size-3.5"><path d="M16 6 L28 27 H4Z" fill="#85c3f7" /><path d="M16 0 V8 M4 29 L8 24 M28 29 L24 24" stroke="#dfdfdf" strokeWidth="1.500" /><g fill="#fff"><circle cx="16" cy="4" r="3" /><circle cx="4" cy="28" r="3" /><circle cx="28" cy="28" r="3" /></g></Ico>}
                                    <span className={`ml-1 ${o.selected ? "text-[#f9b93c]" : "text-[#c5c5c5]"}`}>{o.name}</span>
                                </div>
                            </td>
                            <td className="h-5 w-10 border-x border-[#353535] p-0">
                                <div className="flex h-5 items-center gap-[5px] pl-[2px]">
                                    <Ico size="size-3"><rect width="32" height="32" rx="4" fill="#8c8c8c" /><path d="M6 26 L26 6" stroke="#2b2b2b" strokeWidth="3" /></Ico>
                                    <span className="flex flex-col gap-[3px]">
                                        <span className={`size-[5px] rounded-full ${o.red ? "bg-[#e85454]" : "bg-[#8c8c8c]"}`} />
                                        <span className={`size-[5px] rounded-full ${o.red ? "bg-[#e85454]" : "bg-[#8c8c8c]"}`} />
                                    </span>
                                </div>
                            </td>
                            <td className="h-5 p-0">
                                <div className="flex h-5 items-center gap-1">
                                    {o.tags.split("").map((t, k) => <TagIcon key={k} kind={t} />)}
                                </div>
                            </td>
                        </tr>
                    ))}
                </tbody>
            </table>
            <div className="flex flex-1 pl-[82px]"><div className="w-10 border-x border-[#4a4a4a]" /></div>
        </section>
    )
}

/* ---------- attribute manager ---------- */
function AttributeManager() {
    const g = "#9a9a9a"
    return (
        <section className="mt-1 flex-1 border-t border-l-2 border-[#4a4a4a]">
            <div className="flex h-[23px] items-center gap-[14px] border-b border-[#4f4f4f] pr-[1px] pl-[5px]">
                <div className="-mr-1 flex"><Burger /></div>
                {["Mode", "Edit", "User Data"].map((m) => <button key={m}>{m}</button>)}
                <div className="ml-auto flex items-center gap-1">
                    <Ico size="size-4"><path d="M31 16 H4 M13 6 L3 16 L13 26" stroke={g} strokeWidth="4" /></Ico>
                    <Ico size="size-4"><path d="M1 16 H28 M19 6 L29 16 L19 26" stroke="#5c5c5c" strokeWidth="3" /></Ico>
                    <Ico size="size-4"><path d="M16 30 V4 M6 13 L16 3 L26 13" stroke="#5c5c5c" strokeWidth="3" /></Ico>
                    <SearchIcon />
                    <Ico size="size-4"><rect x="5" y="14" width="22" height="15" stroke={g} strokeWidth="2" /><path d="M10 14 V8 C10 1 22 1 22 8 V14 M16 19 V24" stroke={g} strokeWidth="2" /></Ico>
                    <Ico size="size-4"><circle cx="16" cy="16" r="13" stroke={g} strokeWidth="2" /><circle cx="16" cy="16" r="5" stroke={g} strokeWidth="3" /></Ico>
                    {PlusBox}
                </div>
            </div>
            <div className="mt-1 flex items-center gap-[5px] pl-[2px]">
                <Ico size="size-5"><circle cx="16" cy="16" r="14" stroke="#f39128" strokeWidth="2.500" /><path d="M9 8 L23 15 L18 17 L23 22 L21 24 L16 19 L14 23Z" fill="#181818" /></Ico>
                Live Selection
            </div>
            <div className="mt-[5px] ml-[2px] flex w-[424px] gap-[1px] rounded-sm ring-1 ring-[#343434]">
                {["Options", "Modeling Axis", "Object Axis", "Subdivision Surface"].map((t) => (
                    <button key={t} className={`h-[18px] flex-1 whitespace-nowrap ${t === "Modeling Axis" ? "bg-[#86a3d1] text-black" : "bg-[#5a5a5a]"}`}>{t}</button>
                ))}
            </div>
            <h2 className="mt-[7px] pl-[3px] leading-4 font-bold text-white">Modeling Axis</h2>
            <div className="pr-[3px] pl-[25px]">
                <div className="mt-1 grid grid-cols-[83px_99px_81px_70px] items-center">
                    <span className="overflow-hidden pr-1.5 whitespace-nowrap">Axis . . . . . . . .</span>
                    <SelectBox label="Axis" value="Selected" className="mr-[26px]" />
                    <span>Orientation . .</span>
                    <SelectBox label="Orientation" value="Axis" />
                </div>
                <div className="mt-[3px] grid grid-cols-[182px_1fr]">
                    <CheckBox label="Retain Changes" before />
                    <CheckBox label="Along Normals" disabled before />
                </div>
                <div className="mt-[3px] flex items-center">
                    <label htmlFor="object-link" className="w-[37px] text-[#7c7c7c]">Object</label>
                    <input id="object-link" disabled className="h-[17px] min-w-0 flex-1 rounded-l-sm border border-[#454545] bg-[#393939]" />
                    <button aria-label="Pick from list" disabled className="flex h-[17px] w-3 items-center justify-center bg-[#4a4a4a]"><Ico size="size-2"><path d="M3 10 L16 22 L29 10" stroke="#8a8a8a" strokeWidth="4" /></Ico></button>
                    <Ico size="mx-[3px] size-4"><circle cx="16" cy="16" r="14" stroke="#555" strokeWidth="2" /><path d="M10 9 L23 15 L18 22Z" fill="#555" /></Ico>
                </div>
                {["X", "Y", "Z"].map((a) => (
                    <div key={a} className="mt-[3px] flex items-center">
                        <span className="w-[37px]">{a} . . .</span>
                        <NumberField label={a} value="0 %" className="w-[75px]" />
                        <input
                            type="range"
                            aria-label={`${a} offset`}
                            defaultValue={50}
                            className="h-[19px] min-w-0 flex-1 appearance-none rounded-r-sm border border-[#4a4a4a] bg-[#303030] bg-[linear-gradient(to_right,#646464_50%,#303030_50%)] [&::-webkit-slider-thumb]:h-[17px] [&::-webkit-slider-thumb]:w-[3px] [&::-webkit-slider-thumb]:appearance-none [&::-webkit-slider-thumb]:bg-[#86a3d1]"
                        />
                    </div>
                ))}
            </div>
        </section>
    )
}

function SideTabs({ tabs, className }: { tabs: string[]; className: string }) {
    return (
        <div className={`flex flex-col ${className}`}>
            {tabs.map((t, i) => (
                <button key={t} className={`flex w-5 items-center justify-center rounded-r-[3px] pt-[5px] pb-[4px] [writing-mode:vertical-rl] ${i === 0 ? "border border-l-0 border-[#4f4f4f] bg-[#3c3c3c] text-[#e4e4e4]" : "text-[#7c7c7c]"}`}>{t}</button>
            ))}
        </div>
    )
}

function UntriangulateDialog() {
    return (
        <div role="dialog" aria-label="Untriangulate" className="absolute top-[408px] left-[698px] z-30 w-[282px] border-r-2 border-b-2 border-[#2c2c2c] bg-[#3c3c3c]">
            <div className="flex h-[30px] items-center gap-1 bg-white px-2 text-[12px] text-black">
                <C4dLogo />
                <span className="flex-1">Untriangulate</span>
                <button aria-label="Close"><svg viewBox="0 0 12 12" className="size-3" stroke="#000"><path d="M1 1 L11 11 M11 1 L1 11" /></svg></button>
            </div>
            <div className="h-[117px] pt-1">
                <div className="pl-1"><CheckBox label="Evaluate Angle" checked disabled /></div>
                <div className="-mt-[2px] flex h-[25px] w-[98px] items-center border-2 border-dashed border-[#f30000] pl-[2px]"><CheckBox label="Create N-gons" checked /></div>
                <div className="flex items-center pl-1">
                    <span className="w-[35px]">Angle</span>
                    <NumberField label="Angle" value="0.1 °" className="w-[68px]" />
                </div>
                <div className="mt-[25px] flex justify-center gap-1.5 text-[#dcdcdc]">
                    <button className="h-[25px] w-[63px] rounded-[3px] bg-[#5a5a5a] ring-1 ring-[#333]">OK</button>
                    <button className="h-[25px] w-[63px] rounded-[3px] bg-[#5a5a5a] ring-1 ring-[#333]">Cancel</button>
                </div>
            </div>
        </div>
    )
}

export default function App() {
    return (
        <div className="relative flex min-h-screen flex-col bg-[#3c3c3c] text-[11px] leading-4 text-[#c8c8c8] [font-family:'Open_Sans','Noto_Sans_CJK_KR',sans-serif]">
            <header className="flex h-[23px] items-center bg-white pr-[2px] pl-[2px] text-[12px] text-black">
                <C4dLogo />
                <span className="ml-[5px] flex-1">Cinema 4D R21.115 (RC) - [아이폰.c4d *] - Main</span>
                <button aria-label="Minimize" className="flex w-[46px] justify-center"><svg viewBox="0 0 10 10" className="size-2.5" stroke="#000"><path d="M0 5.500 H10" /></svg></button>
                <button aria-label="Restore" className="flex w-[46px] justify-center"><svg viewBox="0 0 10 10" className="size-2.5" stroke="#000" fill="none"><path d="M.5 2.500 H7.500 V9.500 H.5Z M2.500 2.500 V.5 H9.500 V7.500 H7.500" /></svg></button>
                <button aria-label="Close" className="flex w-[46px] justify-center"><svg viewBox="0 0 10 10" className="size-2.5" stroke="#000"><path d="M0 0 L10 10 M10 0 L0 10" /></svg></button>
            </header>
            <MenuBar />
            <div className="flex flex-1">
                <div className="flex min-w-0 flex-1 flex-col">
                    <div className="flex h-11 items-center gap-3 pt-[2px] pl-[1px]">
                        <div className="-mr-[9px]"><Grip vertical /></div>
                        <ToolGroup tools={[{ name: "Undo", icon: Undo }, { name: "Redo", icon: Redo }]} />
                        <div className="flex w-[372px] gap-1">
                            <ToolGroup tools={[
                                { name: "Live Selection", icon: LiveSel, on: "blue", more: true },
                                { name: "Move", icon: <Ico>{MoveShape}</Ico> },
                                { name: "Scale", icon: <Ico>{ScaleShape}</Ico> },
                                { name: "Rotate", icon: <Ico>{RotateShape}</Ico> },
                            ]} />
                            <ToolGroup tools={[{ name: "PSR", icon: Psr }]} />
                        </div>
                        <ToolGroup tools={[
                            { name: "Render View", icon: RenderView },
                            { name: "Render to Picture Viewer", icon: RenderPic, more: true },
                            { name: "Render Settings", icon: RenderSet, on: "yellow" },
                        ]} />
                        <div className="flex gap-1">
                            <ToolGroup tools={[
                                { name: "Cube", icon: Primitive, more: true },
                                { name: "Pen", icon: PenTool, more: true },
                                { name: "Subdivision Surface", icon: Subdiv, more: true },
                                { name: "Extrude object", icon: Extrude, on: "outline", more: true },
                                { name: "Cloner", icon: Cloner, on: "outline", more: true },
                                { name: "Array", icon: ArrayIcon, on: "yellow", more: true },
                                { name: "Field", icon: FieldIcon, more: true },
                                { name: "Deformer", icon: Deformer, more: true },
                            ]} />
                            <ToolGroup tools={[
                                { name: "Floor", icon: FloorIcon, more: true },
                                { name: "Camera", icon: <Ico>{CameraShape}</Ico>, more: true },
                                { name: "Light", icon: LightIcon, more: true },
                            ]} />
                        </div>
                    </div>
                    <div className="flex flex-1">
                        <aside className="flex w-[39px] flex-col gap-3 pl-[1px]">
                            <div className="-mb-2 w-8 pl-[2px]"><Grip /></div>
                            <div className="w-[34px]"><ToolGroup column tools={[{ name: "Make Editable", icon: MakeEditable, more: true }]} /></div>
                            <div className="flex w-[34px] flex-col gap-1">
                                <ToolGroup column tools={[{ name: "Model", icon: ModelMode, more: true }, { name: "Texture", icon: TextureMode }]} />
                                <ToolGroup column tools={[{ name: "Points", icon: PointMode }, { name: "Edges", icon: EdgeMode, on: "blue" }, { name: "Polygons", icon: PolyMode }]} />
                                <ToolGroup column tools={[{ name: "Enable Axis", icon: AxisMode }]} />
                            </div>
                            <div className="w-[34px]">
                                <ToolGroup column tools={[
                                    { name: "Solo off", icon: <SnapIcon fill="#858585" />, on: "blue" },
                                    { name: "Solo single", icon: <SnapIcon fill="#f39128" />, more: true },
                                    { name: "Solo hierarchy", icon: <SnapIcon fill="#ececec" ring="#e85a34" /> },
                                ]} />
                            </div>
                            <div className="w-[34px]"><ToolGroup column tools={[{ name: "Snap", icon: Magnet, more: true }]} /></div>
                            <div className="w-[34px]">
                                <ToolGroup column tools={[
                                    { name: "Workplane", icon: <GridIcon color="#e08a2c" /> },
                                    { name: "Lock Workplane", on: "blue", more: true, icon: <GridIcon color="#1b1b1b"><path d="M1 20 H13 V31 H1Z" fill="#141414" /><path d="M3.500 20 V18 C3.500 13 10.500 13 10.500 18 V20" stroke="#141414" strokeWidth="2" /><circle cx="7" cy="25" r="1.500" fill="#86a3d1" /></GridIcon> },
                                    { name: "Align Workplane", more: true, icon: <GridIcon color="#1b1b1b"><path d="M21 18 C15 20 15 28 21 31 M25 18 C31 20 31 28 25 31" stroke="#f39128" strokeWidth="3" /></GridIcon> },
                                ]} />
                            </div>
                        </aside>
                        <main className="flex min-w-0 flex-1 flex-col">
                            <Viewport />
                            <Timeline />
                            <BottomPanels />
                        </main>
                    </div>
                </div>
                <div className="mt-[5px] ml-1 flex w-[492px] flex-col">
                    <ObjectManager />
                    <AttributeManager />
                </div>
                <div className="mt-[5px] w-6 bg-[#323232]">
                    <SideTabs tabs={["Objects", "Takes", "Content Browser"]} className="h-[472px]" />
                    <SideTabs tabs={["Attributes", "Layers", "Structure"]} className="" />
                </div>
            </div>
            <footer className="flex h-6 items-center gap-2.5 border-t border-[#4f4f4f] pl-[5px]">
                <Burger />
                Attempts to convert triangles to quadrangles [Shortcut U~U, U~Shift+U]
            </footer>
            <UntriangulateDialog />
        </div>
    )
}
